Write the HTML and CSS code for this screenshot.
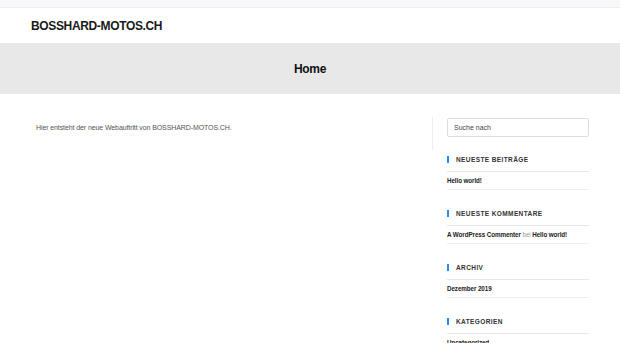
FILE: index.html
```html
<!DOCTYPE html>
<html lang="de">
<head>
<meta charset="utf-8">
<title>BOSSHARD-MOTOS.CH</title>
<link rel="stylesheet" href="styles.css">
</head>
<body>
<div class="topbar"></div>
<header class="site-header">
  <div class="site-title">BOSSHARD-MOTOS.CH</div>
</header>
<div class="page-title-bar">
  <h1 class="page-title">Home</h1>
</div>
<div class="main">
  <div class="content">
    <p>Hier entsteht der neue Webauftritt von BOSSHARD-MOTOS.CH.</p>
  </div>
  <aside class="sidebar">
    <div class="search-wrap">
      <div class="search">Suche nach</div>
    </div>
    <section class="widget">
      <h2 class="widget-title">Neueste Beiträge</h2>
      <ul class="widget-list"><li><b>Hello world!</b></li></ul>
    </section>
    <section class="widget">
      <h2 class="widget-title">Neueste Kommentare</h2>
      <ul class="widget-list"><li><b>A WordPress Commenter</b> <span class="muted">bei</span> <b>Hello world!</b></li></ul>
    </section>
    <section class="widget">
      <h2 class="widget-title">Archiv</h2>
      <ul class="widget-list"><li><b>Dezember 2019</b></li></ul>
    </section>
    <section class="widget">
      <h2 class="widget-title">Kategorien</h2>
      <ul class="widget-list"><li><b>Uncategorized</b></li></ul>
    </section>
  </aside>
</div>
</body>
</html>
```
FILE: styles.css
```css
* { box-sizing: border-box; }
html, body { margin: 0; padding: 0; }
body {
  font-family: "Liberation Sans", Arial, sans-serif;
  background: #fff;
  color: #333;
  overflow: hidden;
}
.topbar {
  height: 8px;
  background: #f8f8fb;
  border-bottom: 1px solid #ededf2;
}
.site-header {
  height: 35px;
  display: flex;
  align-items: center;
  padding-left: 31px;
}
.site-title {
  font-size: 12px;
  font-weight: 700;
  letter-spacing: -0.35px;
  color: #1a1a1a;
}
.page-title-bar {
  height: 51px;
  background: #e8e8e8;
  display: flex;
  align-items: center;
  justify-content: center;
}
.page-title {
  margin: 0;
  font-size: 12px;
  font-weight: 700;
  letter-spacing: -0.3px;
  color: #111;
}
.main {
  display: flex;
  padding-top: 23px;
}
.content {
  width: 432px;
  padding-left: 36px;
}
.content p {
  margin: 7px 0 0;
  font-size: 7px;
  color: #555;
  letter-spacing: -0.1px;
}
.sidebar {
  padding-left: 15px;
  width: 173px;
  align-self: flex-start;
}
.search-wrap {
  margin-left: -15px;
  padding: 1px 0 13px 14px;
  border-left: 1px solid #eee;
}
.search {
  width: 142px;
  height: 19px;
  border: 1px solid #ddd;
  border-radius: 2px;
  font-size: 7px;
  color: #444;
  padding-left: 6px;
  display: flex;
  align-items: center;
}
.widget { width: 142px; }
.widget-title {
  margin: 6px 0 0;
  font-size: 6.5px;
  font-weight: 700;
  letter-spacing: 0.4px;
  text-transform: uppercase;
  color: #333;
  border-left: 2px solid #1e8cff;
  padding-left: 7px;
  line-height: 7px;
}
.widget + .widget .widget-title { margin-top: 20px; }
.widget-list {
  list-style: none;
  margin: 8px 0 0;
  padding: 0;
  border-top: 1px solid #e8e8e8;
}
.widget-list li {
  font-size: 6.3px;
  line-height: 8px;
  padding: 5px 0 4px;
  border-bottom: 1px solid #eee;
  color: #222;
  letter-spacing: -0.1px;
}
.widget-list b { font-weight: 700; }
.muted { color: #999; }
```
